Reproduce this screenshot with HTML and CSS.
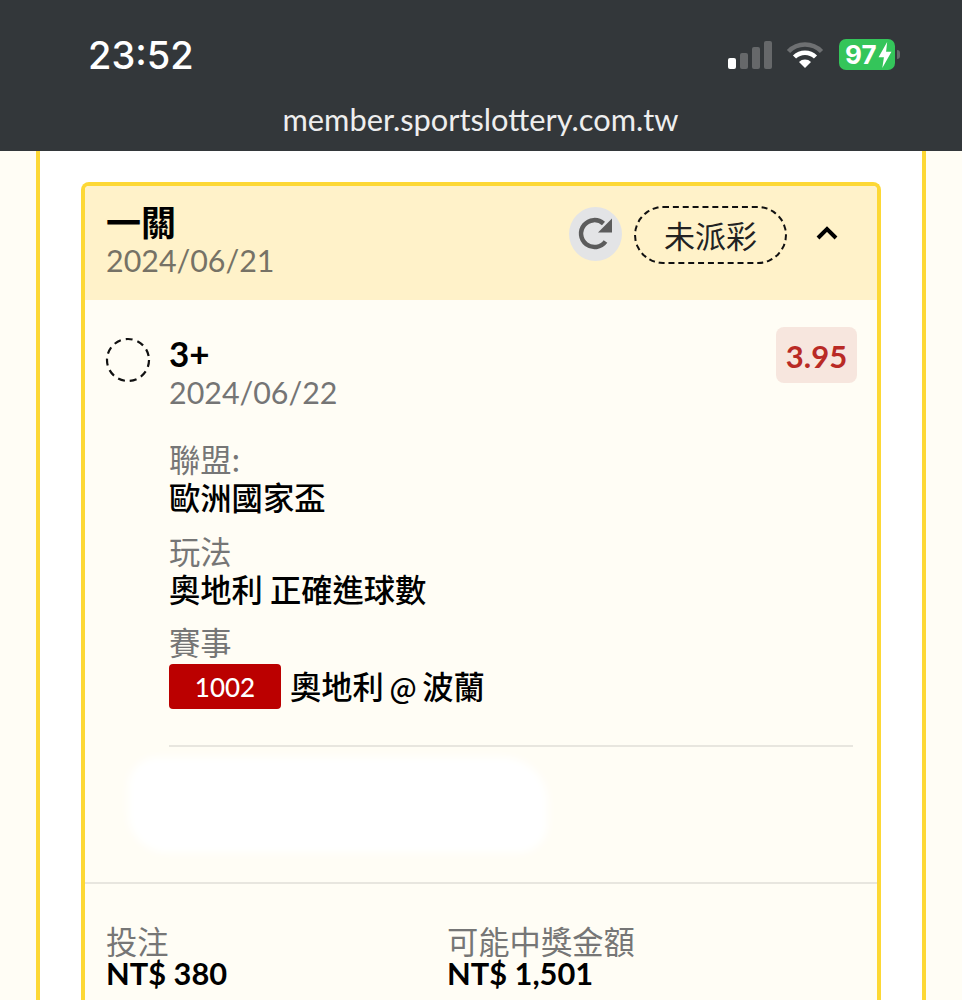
FILE: index.html
```html
<!DOCTYPE html>
<html lang="zh-Hant">
<head>
    <meta charset="UTF-8">
    <meta name="viewport" content="width=device-width, initial-scale=1.0">
    <title>member.sportslottery.com.tw</title>
    <link rel="stylesheet" href="styles.css">
</head>
<body>
    <header class="topbar">
        <div class="status">
            <span class="clock">23:52</span>
            <div class="status-icons">
                <div class="signal">
                    <i class="bar bar1"></i><i class="bar bar2"></i><i class="bar bar3"></i><i class="bar bar4"></i>
                </div>
                <svg class="wifi" width="38" height="28" viewBox="0 0 38 28">
                    <path d="M2.5 10.5 A23 23 0 0 1 35.5 10.5" fill="none" stroke="#6e7072" stroke-width="4.5"/>
                    <path d="M8.5 16 A15 15 0 0 1 29.5 16" fill="none" stroke="#fff" stroke-width="4.5"/>
                    <path d="M13 21 A8.5 8.5 0 0 1 25 21 L19 27 Z" fill="#fff"/>
                </svg>
                <div class="battery"><span>97</span><svg width="14" height="26" viewBox="0 0 13 24"><path d="M8.5 0 L0.5 14 H5.5 L4 24 L12.5 9 H7.5 Z" fill="#fff"/></svg></div>
                <i class="battery-tip"></i>
            </div>
        </div>
        <div class="url">member.sportslottery.com.tw</div>
    </header>

    <main class="frame">
        <section class="card">
            <div class="card-head">
                <div>
                    <div class="title">一關</div>
                    <div class="date">2024/06/21</div>
                </div>
                <div class="head-actions">
                    <div class="refresh">
                        <svg width="38" height="38" viewBox="0 0 38 38">
                            <path d="M28.5 26.5 A13.5 13.5 0 1 1 26.5 8.5" fill="none" stroke="#5c5c5c" stroke-width="4.5"/>
                            <path d="M35 3.5 V17.5 H21 Z" fill="#5c5c5c"/>
                        </svg>
                    </div>
                    <div class="pill">未派彩</div>
                    <svg class="chevron" width="24" height="16" viewBox="0 0 24 16">
                        <path d="M3 13 L12 4 L21 13" fill="none" stroke="#000" stroke-width="4"/>
                    </svg>
                </div>
            </div>

            <div class="bet">
                <div class="bet-top">
                    <svg class="pending" width="46" height="46" viewBox="0 0 46 46">
                        <circle cx="23" cy="23" r="21" fill="none" stroke="#111" stroke-width="2.2" stroke-dasharray="7 5"/>
                    </svg>
                    <div class="bet-name">
                        <div class="pick">3+</div>
                        <div class="date">2024/06/22</div>
                    </div>
                    <div class="odds">3.95</div>
                </div>

                <div class="details">
                    <div class="detail">
                        <div class="label">聯盟:</div>
                        <div class="value">歐洲國家盃</div>
                    </div>
                    <div class="detail">
                        <div class="label">玩法</div>
                        <div class="value">奧地利 正確進球數</div>
                    </div>
                    <div class="detail">
                        <div class="label">賽事</div>
                        <div class="match">
                            <span class="match-no">1002</span>
                            <span class="value match-name">奧地利 <span class="at">@</span> 波蘭</span>
                        </div>
                    </div>
                </div>

                <hr class="rule">
                <div class="smudge"></div>
            </div>

            <div class="totals">
                <div class="total">
                    <div class="label">投注</div>
                    <div class="amount">NT$ 380</div>
                </div>
                <div class="total">
                    <div class="label">可能中獎金額</div>
                    <div class="amount">NT$ 1,501</div>
                </div>
            </div>
        </section>
    </main>
</body>
</html>
```

FILE: styles.css
```css
* {
    box-sizing: border-box;
}
html, body {
    height: 1000px;
    margin: 0;
    overflow: hidden;
}
body {
    font-family: Lato, "Noto Sans CJK TC", sans-serif;
    background-color: #fffdf5;
    color: #000;
}

/* phone status bar + url */
.topbar {
    height: 151px;
    background-color: #33373a;
    color: #fff;
}
.status {
    display: flex;
    justify-content: space-between;
    align-items: center;
    height: 78px;
    padding: 31px 62px 0 88px;
}
.clock {
    font-family: Inter, sans-serif;
    font-size: 38px;
    font-weight: 500;
}
.status-icons {
    display: flex;
    align-items: center;
}
.signal {
    display: flex;
    align-items: flex-end;
    gap: 4px;
    height: 28px;
    margin-right: 14px;
}
.bar {
    width: 8px;
    border-radius: 2px;
    background-color: #66686a;
}
.bar1 { height: 11px; background-color: #fff; }
.bar2 { height: 16px; }
.bar3 { height: 22px; }
.bar4 { height: 28px; }
.wifi {
    margin-right: 15px;
}
.battery {
    display: flex;
    align-items: center;
    gap: 1px;
    width: 56px;
    height: 31px;
    padding-left: 6px;
    border-radius: 7px;
    background-color: #34c55a;
    font-family: Inter, sans-serif;
    font-size: 26px;
    font-weight: 700;
}
.battery-tip {
    width: 3px;
    height: 9px;
    margin-left: 2px;
    border-radius: 0 3px 3px 0;
    background-color: #66686a;
}
.url {
    margin-top: 21px;
    text-align: center;
    font-family: Lato, sans-serif;
    font-size: 30.8px;
    line-height: 42px;
    padding-right: 1px;
    color: #eeeeee;
}

/* outer frame, runs past the bottom of the screen */
.frame {
    height: 849px;
    margin: 0 36px;
    padding: 31px 41px 0;
    border: solid #fdd835;
    border-width: 0 4px;
    background-color: #fff;
    overflow: hidden;
}
.card {
    height: 818px;
    border: solid #fdd835;
    border-width: 4px 4px 0;
    border-radius: 8px 8px 0 0;
    background-color: #fffdf5;
    overflow: hidden;
}
.card-head {
    display: flex;
    justify-content: space-between;
    height: 114px;
    padding: 15px 38px 0 21px;
    background-color: #fff2c9;
}
.title {
    font-family: "Noto Sans CJK TC", sans-serif;
    font-size: 35px;
    font-weight: 700;
    line-height: 40px;
}
.date {
    font-size: 30.4px;
    line-height: 38px;
    color: #767266;
}
.head-actions {
    display: flex;
    align-items: flex-start;
    padding-top: 5px;
}
.refresh {
    display: flex;
    align-items: center;
    justify-content: center;
    width: 53px;
    height: 54px;
    margin-top: 1px;
    border-radius: 50%;
    background-color: #e3e4e6;
}
.pill {
    width: 153px;
    height: 58px;
    margin-left: 12px;
    border: 2.5px dashed #111;
    border-radius: 29px;
    text-align: center;
    font-family: "Noto Sans CJK TC", sans-serif;
    font-size: 31px;
    line-height: 53px;
    color: #222;
}
.chevron {
    margin: 19px 0 0 28px;
}

.bet {
    padding: 27px 20px 0 21px;
}
.bet-top {
    display: flex;
    align-items: flex-start;
}
.pending {
    margin: 10px 0 0 -1px;
}
.bet-name {
    flex: 1;
    margin-left: 18px;
    padding-top: 6px;
}
.pick {
    font-size: 35px;
    font-weight: 700;
    line-height: 40px;
}
.bet .date {
    color: #757575;
}
.odds {
    width: 81px;
    height: 56px;
    margin-right: 0;
    border-radius: 8px;
    background-color: #f7e6de;
    text-align: center;
    font-size: 31px;
    font-weight: 700;
    line-height: 59px;
    color: #b92a25;
}
.details {
    display: flex;
    flex-direction: column;
    gap: 14.5px;
    margin: 28px 0 0 63px;
}
.label {
    font-family: "Noto Sans CJK TC", sans-serif;
    font-size: 31.3px;
    line-height: 40px;
    margin-bottom: -2px;
    color: #767676;
}
.value {
    font-family: "Noto Sans CJK TC", sans-serif;
    font-size: 31.3px;
    font-weight: 500;
    line-height: 39px;
}
.match-name {
    word-spacing: -1.5px;
}
.at {
    font-size: 28px;
}
.match {
    display: flex;
    align-items: center;
    gap: 9px;
    margin-top: 4px;
}
.match-no {
    width: 112px;
    height: 45px;
    border-radius: 4px;
    background-color: #bb0000;
    text-align: center;
    font-size: 26px;
    font-weight: 500;
    line-height: 47px;
    color: #fff;
}
.rule {
    height: 2px;
    margin: 36px 4px 0 63px;
    border: 0;
    background-color: #e8e6df;
}
.smudge {
    width: 420px;
    height: 96px;
    margin: 10px 0 29px 22px;
    border-radius: 30px 46px 30px 40px;
    background-color: #fff;
    filter: blur(4px);
}
.totals {
    display: grid;
    grid-template-columns: 341px 1fr;
    padding: 37px 21px 0;
    border-top: 2px solid #e8e6df;
}
.amount {
    font-size: 30.8px;
    font-weight: 700;
    line-height: 30px;
}
```
